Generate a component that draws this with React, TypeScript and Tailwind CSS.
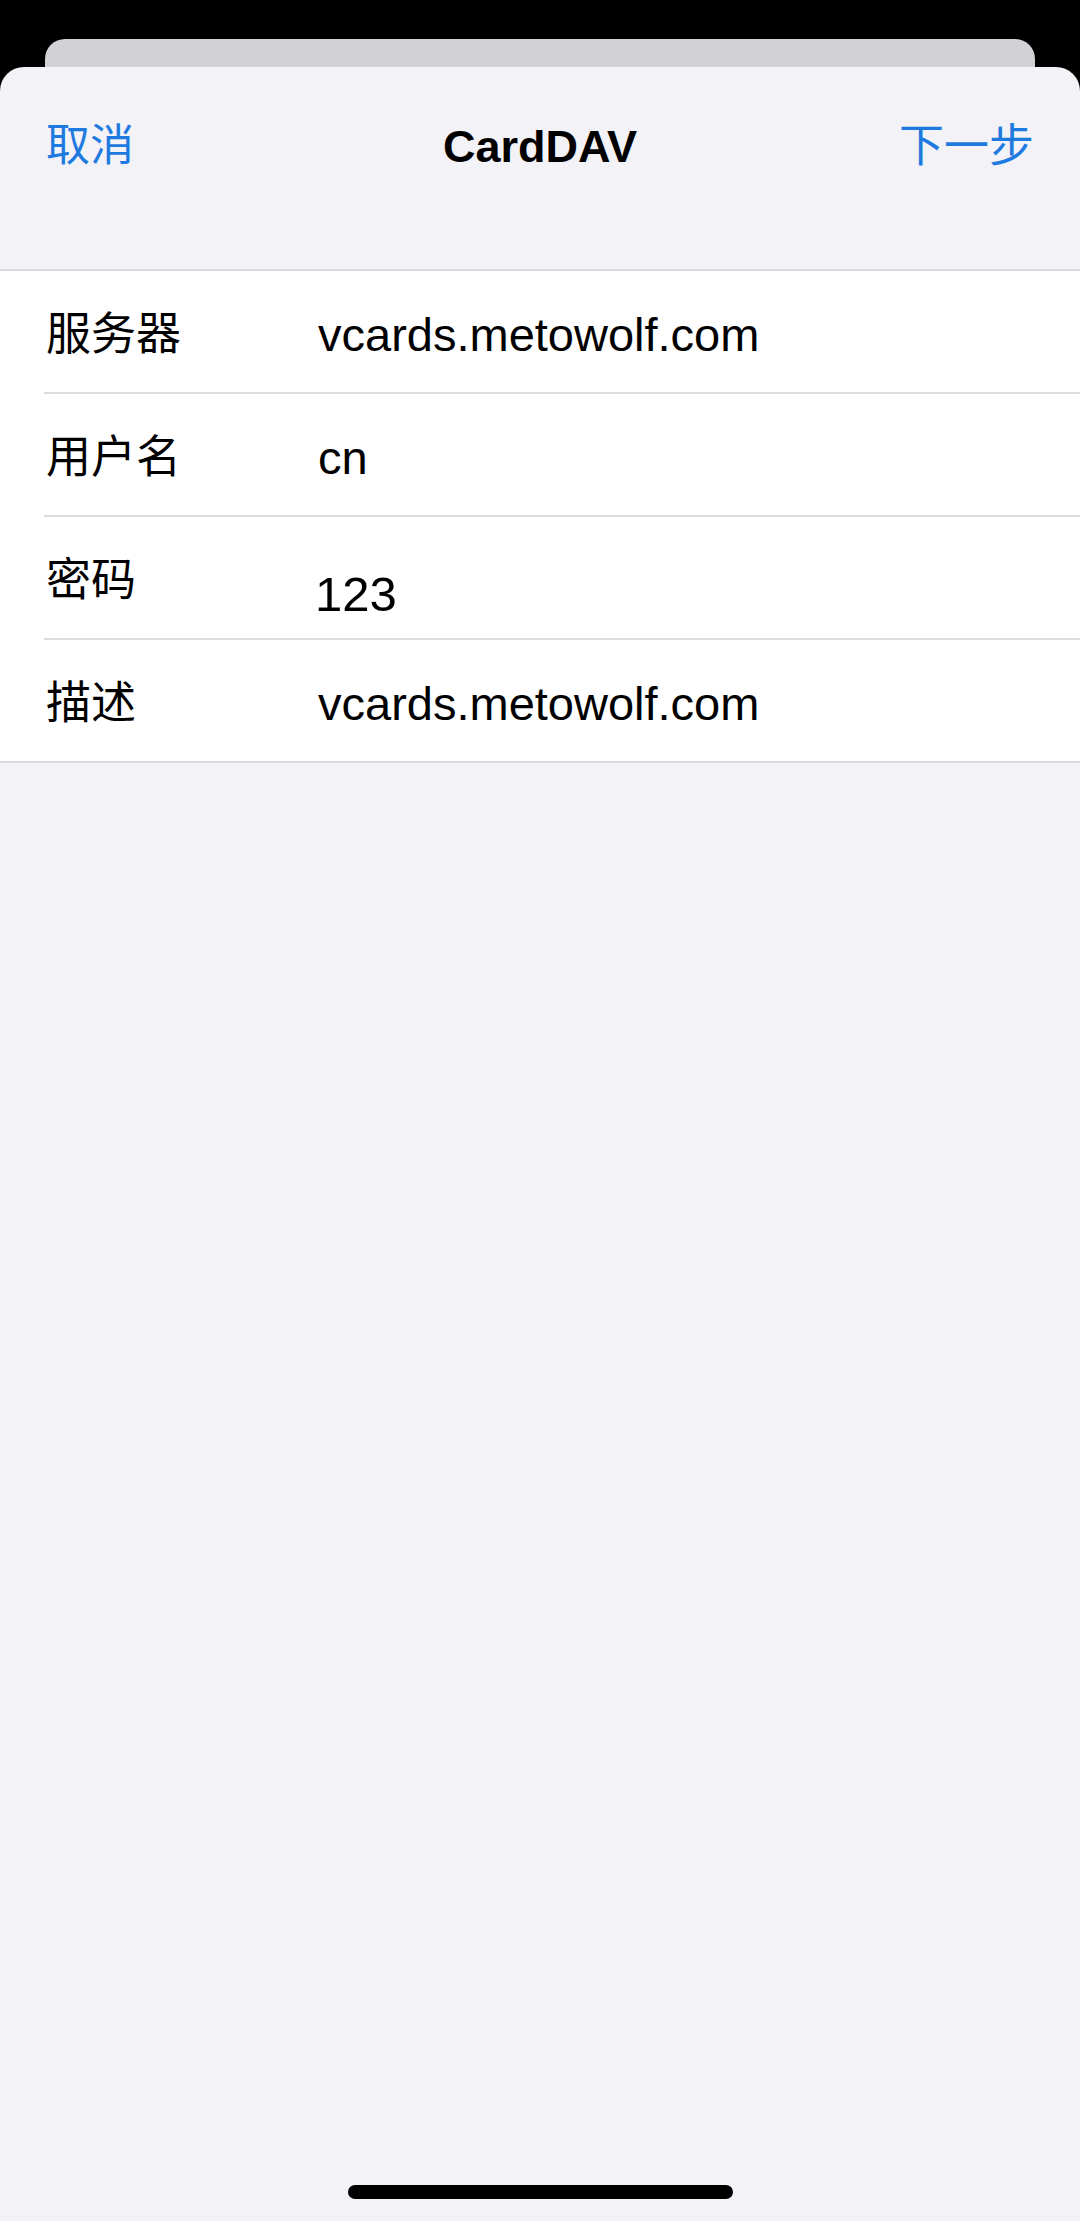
const cjk = "font-['Liberation_Sans','Noto_Sans_CJK_SC',sans-serif]";

type Field = { label: string; value: string; big?: boolean };

const fields: Field[] = [
  { label: "服务器", value: "vcards.metowolf.com" },
  { label: "用户名", value: "cn" },
  { label: "密码", value: "123", big: true },
  { label: "描述", value: "vcards.metowolf.com" },
];

function Row({ field, last }: { field: Field; last: boolean }) {
  return (
    <div className="flex flex-col">
      <div className="flex h-[121px] items-center pl-[46px] pt-[6px]">
        <div className="w-[272px] text-[45px] leading-none text-black">{field.label}</div>
        {field.big ? (
          <div className="-ml-[3px] mt-[28px] text-[49px] leading-none text-black">{field.value}</div>
        ) : (
          <div className="text-[47px] leading-none text-black">{field.value}</div>
        )}
      </div>
      {!last && (
        <div className="pl-[44px]">
          <div className="h-[2px] bg-[#dcdcde]" />
        </div>
      )}
    </div>
  );
}

export default function App() {
  return (
    <div className={`flex h-[2221px] w-[1080px] flex-col overflow-hidden bg-black ${cjk}`}>
      <div className="mx-[45px] mt-[39px] h-[28px] shrink-0 rounded-t-[20px] bg-[#d1d1d6]" />
      <div className="flex flex-1 flex-col rounded-t-[24px] bg-[#f2f2f7]">
        <div className="flex h-[158px] items-center px-[46px]">
          <div className="flex-1 text-[44px] leading-none text-[#1f7ae0]">取消</div>
          <div className="text-[45px] font-bold leading-none text-black">CardDAV</div>
          <div className="flex-1 text-right text-[45px] leading-none text-[#1f7ae0]">下一步</div>
        </div>
        <div className="mt-[44px] border-y-2 border-[#dcdcde] bg-white">
          {fields.map((f, i) => (
            <Row key={f.label} field={f} last={i === fields.length - 1} />
          ))}
        </div>
        <div className="mt-auto flex justify-center pb-[22px]">
          <div className="h-[14px] w-[385px] rounded-full bg-black" />
        </div>
      </div>
    </div>
  );
}
